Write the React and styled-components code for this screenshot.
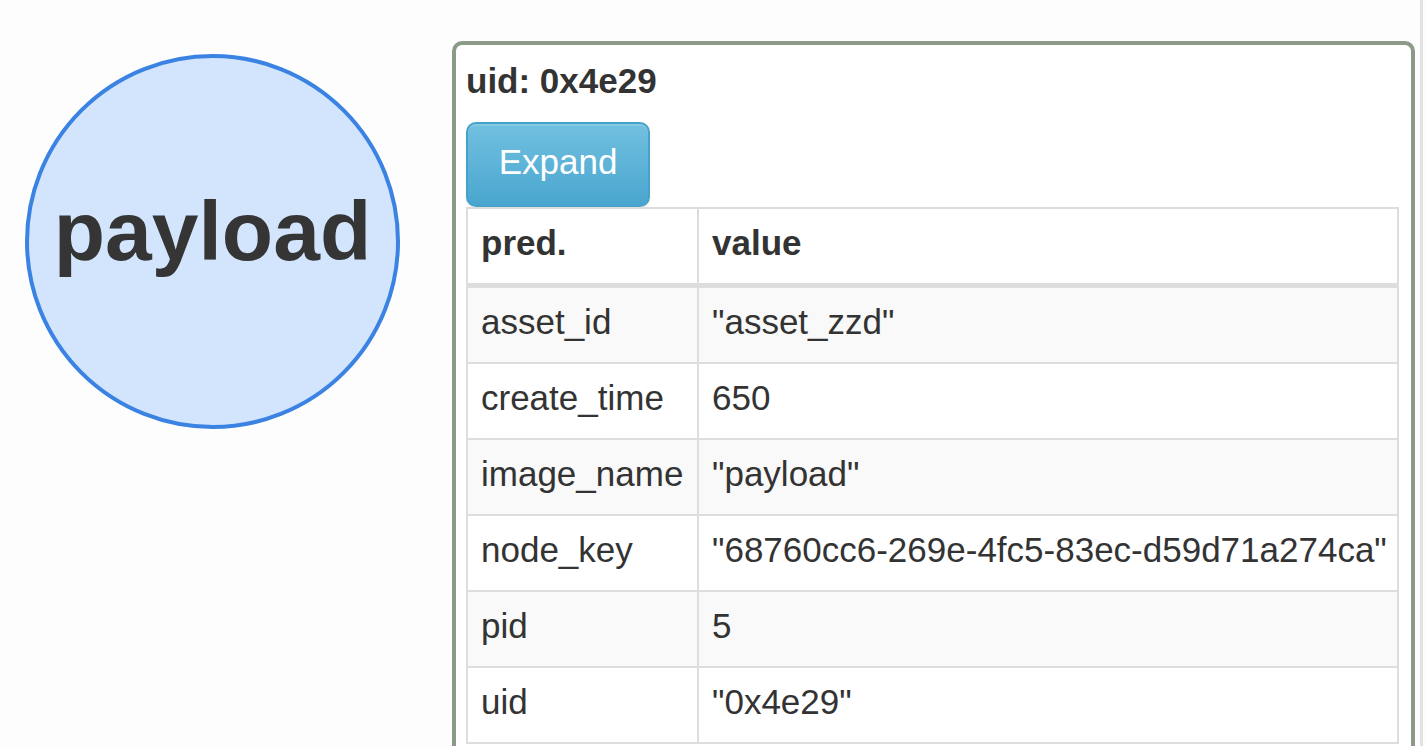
import React from "react";
import styled, { createGlobalStyle } from "styled-components";

const Global = createGlobalStyle`
  html, body { margin: 0; padding: 0; height: 100%; overflow: hidden; background: #fdfdfd; }
  body { font-family: "Liberation Sans", Arial, sans-serif; color: #333; }
  #root { height: 100%; }
`;

const Page = styled.div`
  display: flex;
  align-items: flex-start;
  height: 746px;
  overflow: hidden;
`;

const GraphArea = styled.div`
  width: 452px;
  flex: none;
  padding: 54px 0 0 25px;
  box-sizing: border-box;
`;

const Node = styled.div`
  width: 375px;
  height: 375px;
  box-sizing: border-box;
  border-radius: 50%;
  border: 4px solid #3b83e3;
  background: #d3e5fd;
  display: flex;
  align-items: center;
  justify-content: center;
  padding-bottom: 22px;
`;

const NodeLabel = styled.span`
  font-size: 84px;
  font-weight: 700;
  color: #353535;
  line-height: 1;
`;

const Panel = styled.div`
  flex: none;
  width: 963px;
  margin-top: 41px;
  box-sizing: border-box;
  border: 4px solid #8b9b88;
  border-radius: 10px;
  background: #fff;
  padding: 11px 12px 30px 10px;
  min-height: 800px;
`;

const Title = styled.div`
  font-size: 35px;
  font-weight: 700;
  line-height: 50px;
  margin-bottom: 16px;
`;

const Button = styled.button`
  display: block;
  font-family: "Liberation Sans", Arial, sans-serif;
  font-size: 35px;
  line-height: 50px;
  color: #fff;
  padding: 12px 30px 18px;
  border: 2.5px solid #46a2c9;
  border-radius: 10px;
  background: linear-gradient(#71c0e0, #4aa6cf);
  box-shadow: inset 0 2px 0 rgba(255,255,255,0.15), 0 2px 2px rgba(0,0,0,0.08);
  cursor: pointer;
  width: 184px;
  height: 85px;
  box-sizing: border-box;
`;

const Table = styled.table`
  width: 933px;
  border-collapse: collapse;
  border: 2px solid #ddd;
  font-size: 35px;
  table-layout: fixed;
`;

const Th = styled.th`
  text-align: left;
  font-weight: 700;
  line-height: 50px;
  padding: 9px 13px 15px;
  border: 2px solid #ddd;
  border-bottom: 5px solid #ddd;
  background: #fff;
  white-space: nowrap;
`;

const Row = styled.tr`
  background: ${(p) => (p.$striped ? "#f9f9f9" : "#fff")};
`;

const Td = styled.td`
  line-height: 50px;
  padding: 9px 13px 15px;
  border: 2px solid #ddd;
  white-space: nowrap;
  overflow: hidden;
`;

const Divider = styled.div`
  flex: none;
  width: 3px;
  height: 746px;
  margin-left: 5px;
  background: #e2e2e2;
`;

const rows = [
  ["asset_id", '"asset_zzd"'],
  ["create_time", "650"],
  ["image_name", '"payload"'],
  ["node_key", '"68760cc6-269e-4fc5-83ec-d59d71a274ca"'],
  ["pid", "5"],
  ["uid", '"0x4e29"'],
];

export default function App() {
  return (
    <>
      <Global />
      <Page>
        <GraphArea>
          <Node>
            <NodeLabel>payload</NodeLabel>
          </Node>
        </GraphArea>
        <Panel>
          <Title>uid: 0x4e29</Title>
          <Button>Expand</Button>
          <Table>
            <colgroup>
              <col style={{ width: 231 }} />
              <col />
            </colgroup>
            <thead>
              <tr>
                <Th>pred.</Th>
                <Th>value</Th>
              </tr>
            </thead>
            <tbody>
              {rows.map(([k, v], i) => (
                <Row key={k} $striped={i % 2 === 0}>
                  <Td>{k}</Td>
                  <Td>{v}</Td>
                </Row>
              ))}
            </tbody>
          </Table>
        </Panel>
        <Divider />
      </Page>
    </>
  );
}
